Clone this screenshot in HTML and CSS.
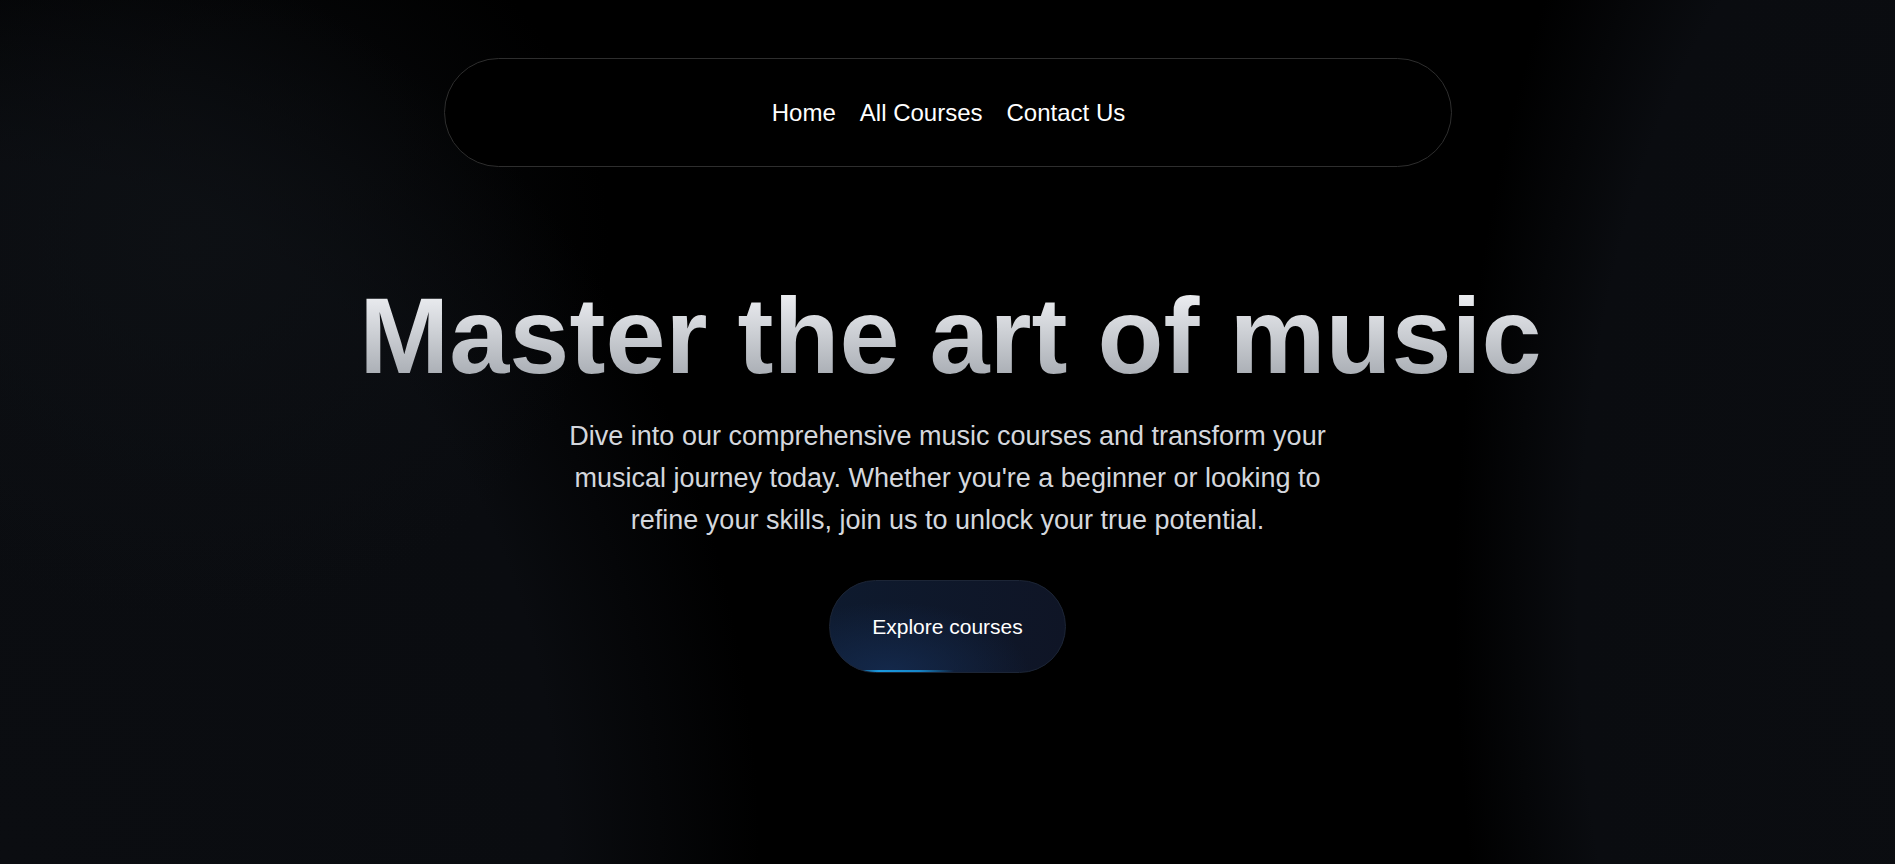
FILE: index.html
```html
<!DOCTYPE html>
<html lang="en">
<head>
<meta charset="utf-8">
<title>Master the art of music</title>
<link rel="stylesheet" href="styles.css">
</head>
<body>
<div class="page">
  <header class="header">
    <nav class="nav">
      <a class="nav-link" href="#">Home</a>
      <a class="nav-link" href="#">All Courses</a>
      <a class="nav-link" href="#">Contact Us</a>
    </nav>
  </header>
  <main class="hero">
    <h1 class="hero-title">Master the art of music</h1>
    <p class="hero-text">Dive into our comprehensive music courses and transform your musical journey today. Whether you're a beginner or looking to refine your skills, join us to unlock your true potential.</p>
    <a class="hero-button" href="#">Explore courses</a>
  </main>
</div>
</body>
</html>
```

FILE: styles.css
```css
* {
  box-sizing: border-box;
}

html, body {
  margin: 0;
  padding: 0;
  height: 100%;
}

body {
  font-family: "Liberation Sans", Arial, Helvetica, sans-serif;
  color: #fff;
  background-color: #000;
  background-image:
    radial-gradient(ellipse 420px 380px at 10% 28%, rgba(14, 17, 21, 0.8) 0%, rgba(14, 17, 21, 0) 100%),
    radial-gradient(ellipse 800px 1000px at 0% 100%, rgba(11, 13, 17, 1) 0%, rgba(10, 12, 16, 1) 70%, rgba(0, 0, 0, 0) 95%),
    radial-gradient(ellipse 440px 1000px at 100% 70%, rgba(11, 13, 17, 1) 0%, rgba(10, 12, 16, 1) 72%, rgba(0, 0, 0, 0) 100%),
    linear-gradient(to bottom, rgba(0, 0, 0, 0) 70%, rgba(0, 0, 0, 0.3) 100%);
  background-repeat: no-repeat;
  overflow: hidden;
}

.page {
  min-height: 864px;
  display: flex;
  flex-direction: column;
  align-items: center;
}

.header {
  padding-top: 58px;
  display: flex;
  justify-content: center;
  width: 100%;
}

.nav {
  width: 1008px;
  height: 109px;
  border: 1px solid #2e2e2e;
  border-radius: 60px;
  background: #000;
  display: flex;
  align-items: center;
  justify-content: center;
  gap: 24px;
  padding-left: 2px;
}

.nav-link {
  color: #fff;
  text-decoration: none;
  font-size: 24px;
  line-height: 28px;
}

.hero {
  display: flex;
  flex-direction: column;
  align-items: center;
  text-align: center;
  padding-top: 115px;
}

.hero-title {
  margin: 0;
  font-size: 108px;
  line-height: 108px;
  font-weight: 700;
  letter-spacing: 0;
  background: linear-gradient(to bottom, #f5f6f8 0%, #e4e6ea 20%, #9ea3aa 100%);
  -webkit-background-clip: text;
  background-clip: text;
  color: transparent;
  padding-left: 6px;
}

.hero-text {
  margin: 25px 0 0;
  max-width: 790px;
  font-size: 27px;
  line-height: 42px;
  color: #d4d7dd;
}

.hero-button {
  position: relative;
  margin-top: 39px;
  width: 237px;
  height: 93px;
  display: flex;
  align-items: center;
  justify-content: center;
  border-radius: 47px;
  border: 1px solid #1c2536;
  color: #fff;
  text-decoration: none;
  font-size: 21px;
  background:
    radial-gradient(ellipse 140px 70px at 25% 100%, rgba(20, 42, 78, 0.9) 0%, rgba(20, 42, 78, 0) 100%),
    linear-gradient(to right, #0e1a2e, #0f1526);
  overflow: hidden;
}

.hero-button::after {
  content: "";
  position: absolute;
  left: 24px;
  bottom: 0;
  width: 100px;
  height: 2px;
  background: linear-gradient(to right, rgba(14, 165, 233, 0.2), #1a9be0 25%, #1686c8 65%, rgba(14, 165, 233, 0));
}
```
